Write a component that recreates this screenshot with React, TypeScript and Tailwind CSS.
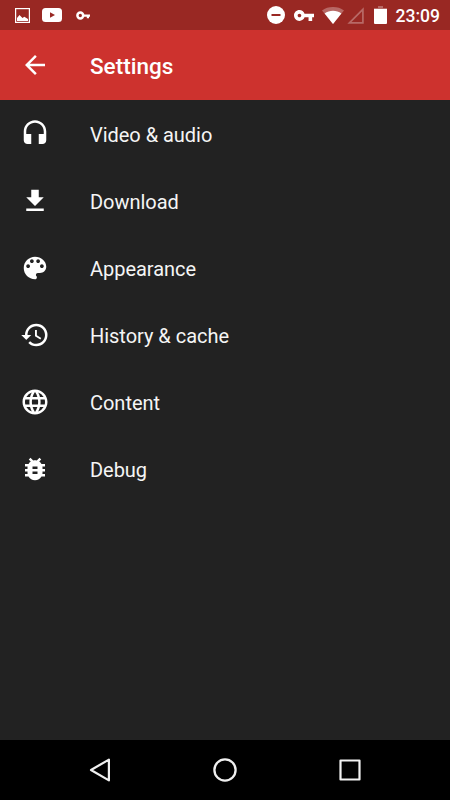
import type { ReactNode } from "react";
import {
  MdArrowBack,
  MdBugReport,
  MdGetApp,
  MdHistory,
  MdLanguage,
} from "react-icons/md";

function HeadsetIcon() {
  return (
    <svg viewBox="0 0 24 24" className="h-[30px] w-[30px]" fill="currentColor">
      <path d="M12 1c-4.970 0-9 4.030-9 9v7c0 1.660 1.340 3 3 3h3v-8H5v-2c0-3.870 3.130-7 7-7s7 3.130 7 7v2h-4v8h3c1.660 0 3-1.340 3-3v-7c0-4.970-4.030-9-9-9z" />
    </svg>
  );
}

function PaletteIcon() {
  return (
    <svg viewBox="0 0 24 24" className="h-[30px] w-[30px]" fill="currentColor">
      <path d="M12 3c-4.970 0-9 4.030-9 9s4.030 9 9 9c.83 0 1.500-.67 1.500-1.500 0-.39-.15-.74-.39-1.010-.23-.26-.38-.61-.38-.99 0-.83.67-1.500 1.500-1.500H16c2.760 0 5-2.240 5-5 0-4.420-4.030-8-9-8zm-5.500 9c-.83 0-1.500-.67-1.500-1.500S5.670 9 6.500 9 8 9.670 8 10.500 7.330 12 6.500 12zm3-4C8.670 8 8 7.330 8 6.500S8.670 5 9.500 5s1.500.67 1.500 1.500S10.330 8 9.500 8zm5 0c-.83 0-1.500-.67-1.500-1.500S13.670 5 14.500 5s1.500.67 1.500 1.500S15.330 8 14.500 8zm3 4c-.83 0-1.500-.67-1.500-1.500S16.670 9 17.500 9s1.500.67 1.500 1.500-.67 1.500-1.500 1.500z" />
    </svg>
  );
}

const items: { label: string; icon: ReactNode }[] = [
  { label: "Video & audio", icon: <HeadsetIcon /> },
  { label: "Download", icon: <MdGetApp size={30} /> },
  { label: "Appearance", icon: <PaletteIcon /> },
  { label: "History & cache", icon: <MdHistory size={30} /> },
  { label: "Content", icon: <MdLanguage size={30} /> },
  { label: "Debug", icon: <MdBugReport size={30} /> },
];

function StatusBar() {
  return (
    <div className="flex h-[30px] items-center justify-between bg-[#992823] pr-[10px] pl-[15px]">
      <div className="flex items-center">
        <svg viewBox="0 0 15 15" className="h-[15px] w-[15px]">
          <rect x="0.6" y="0.6" width="13.8" height="13.8" fill="none" stroke="#fff" strokeWidth="1.2" />
          <path d="M2 13v-3l2.500-3 3 3 1.800-1.200L13 11v2z" fill="#fff" />
        </svg>
        <svg viewBox="0 0 20 14" className="ml-[12px] h-[14px] w-5">
          <rect width="20" height="14" rx="3.5" fill="#fff" />
          <path d="M8 4.200v5.600l5-2.800z" fill="#992823" />
        </svg>
        <svg viewBox="0 0 15 9" className="ml-[14px] h-[9px] w-[15px]">
          <circle cx="4.300" cy="4.500" r="2.900" fill="none" stroke="#fff" strokeWidth="2.500" />
          <path d="M7 3.400h7v2.400h-1v1.400h-2.200V5.800H7z" fill="#fff" />
        </svg>
      </div>
      <div className="flex items-center">
        <svg viewBox="0 0 18 18" className="h-[18px] w-[18px]">
          <circle cx="9" cy="9" r="9" fill="#fff" />
          <path d="M4.500 8h9v2h-9z" fill="#992823" />
        </svg>
        <svg viewBox="1 6 22 12" className="ml-[9px] h-[11px] w-5" fill="#fff">
          <path d="M12.650 10C11.830 7.670 9.610 6 7 6c-3.310 0-6 2.690-6 6s2.690 6 6 6c2.610 0 4.830-1.670 5.650-4H17v4h4v-4h2v-4H12.650zM7 14c-1.100 0-2-.9-2-2s.9-2 2-2 2 .9 2 2-.9 2-2 2z" />
        </svg>
        <svg viewBox="0 0 22 17" className="ml-[8px] h-[17px] w-[22px]" fill="#fff">
          <path d="M0 3.400C3 1.200 6.900 0 11 0s8 1.200 11 3.400L11 17z" opacity="0.3" />
          <path d="M2.600 6.600C5 4.800 8 3.800 11 3.800s6 1 8.400 2.800L11 17z" />
        </svg>
        <svg viewBox="0 0 17 17" className="ml-[3px] h-[17px] w-[17px] opacity-30">
          <path d="M15.900 2.400v13.500H2.400z" fill="none" stroke="#fff" strokeWidth="1.700" />
        </svg>
        <svg viewBox="0 0 13 18" className="ml-[10px] h-[18px] w-[13px]" fill="#fff">
          <path d="M4 0h5v2h4v2H0V2h4z" opacity="0.3" />
          <path d="M0 3h13v14q0 1-1 1H1q-1 0-1-1z" />
        </svg>
        <span className="ml-[9px] pt-[2px] text-[17.500px] leading-[28px] font-medium text-white">
          23:09
        </span>
      </div>
    </div>
  );
}

function NavigationBar() {
  return (
    <div className="flex h-[60px] items-center justify-center bg-black">
      <div className="flex w-[125px] justify-center">
        <svg viewBox="0 0 30 30" className="h-[30px] w-[30px]" fill="none" stroke="#f0f0f0" strokeWidth="2.200" strokeLinejoin="round">
          <path d="M23.900 4.600v20.800L6 15z" />
        </svg>
      </div>
      <div className="flex w-[125px] justify-center">
        <svg viewBox="0 0 30 30" className="h-[30px] w-[30px]" fill="none" stroke="#f0f0f0" strokeWidth="2.300">
          <circle cx="15" cy="15" r="10.600" />
        </svg>
      </div>
      <div className="flex w-[125px] justify-center">
        <svg viewBox="0 0 30 30" className="h-[30px] w-[30px]" fill="none" stroke="#f0f0f0" strokeWidth="2.200" strokeLinejoin="round">
          <rect x="5.500" y="5.500" width="19" height="19" />
        </svg>
      </div>
    </div>
  );
}

function App() {
  return (
    <div className="flex h-[800px] w-[450px] flex-col overflow-hidden bg-[#222222] font-['Roboto',sans-serif]">
      <StatusBar />
      <header className="flex h-[70px] items-center bg-[#cd322e] pl-5 text-white">
        <MdArrowBack size={30} />
        <h1 className="ml-10 pt-[3px] text-[22.500px] font-medium">Settings</h1>
      </header>
      <ul className="flex-1">
        {items.map((item) => (
          <li key={item.label} className="flex h-[67px] items-center pl-5 text-white">
            {item.icon}
            <span className="ml-10 pt-[2px] text-[20px] tracking-[-0.03px] text-[#f5f5f5]">{item.label}</span>
          </li>
        ))}
      </ul>
      <NavigationBar />
    </div>
  );
}

export default App;
